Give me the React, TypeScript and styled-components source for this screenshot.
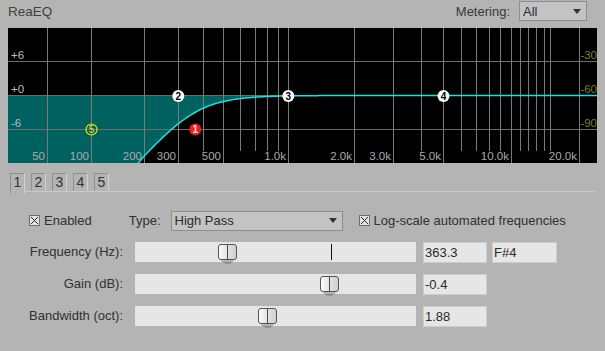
import React from 'react';
import styled, { createGlobalStyle } from 'styled-components';

const GlobalStyle = createGlobalStyle`
  html, body {
    margin: 0;
    padding: 0;
    background: #b4b4b4;
  }
  body {
    font-family: "Liberation Sans", Arial, sans-serif;
  }
`;

// graph geometry (svg coords)
const W = 589;
const H = 135;
const Y0 = 67.5;
const PX_PER_DB = 5.625;

// frequency -> page x, read off the grid
const anchors: [number, number][] = [
  [50, 47.7], [100, 91.7], [200, 144.3], [300, 178.7], [400, 203.3], [500, 223.3],
  [600, 240.7], [700, 255], [800, 267.7], [900, 278.7], [1000, 288.7], [2000, 354.3],
  [3000, 393.3], [4000, 421.3], [5000, 443.3], [6000, 461.3], [7000, 476], [8000, 489.3],
  [9000, 500.3], [10000, 511.3], [11000, 520.3], [12000, 528.7], [13000, 536.7],
  [14000, 544.3], [15000, 550.3], [20000, 579.3],
];

function freqToX(f: number) {
  let i = 0;
  if (f >= anchors[anchors.length - 1][0]) i = anchors.length - 2;
  else if (f > anchors[0][0]) {
    while (f > anchors[i + 1][0]) i++;
  }
  const [f1, x1] = anchors[i];
  const [f2, x2] = anchors[i + 1];
  const t = Math.log(f / f1) / Math.log(f2 / f1);
  return x1 + t * (x2 - x1) - 8;
}

const dbToY = (db: number) => Y0 - db * PX_PER_DB;

// 2nd order high pass at 363.3 Hz
function highPassDb(f: number) {
  const r = Math.pow(f / 363.3, 4);
  return 10 * Math.log10(r / (1 + r));
}

const curvePoints: [number, number][] = [];
for (let f = 120; f <= 24500; f *= 1.025) {
  curvePoints.push([freqToX(f), Math.min(dbToY(highPassDb(f)), H + 3)]);
}
const curvePath = curvePoints
  .map(([x, y], i) => `${i ? 'L' : 'M'}${x.toFixed(2)},${y.toFixed(2)}`)
  .join(' ');
const fillPath = `M0,${Y0} L0,${H + 3} ${curvePoints
  .map(([x, y]) => `L${x.toFixed(2)},${y.toFixed(2)}`)
  .join(' ')} L${W},${Y0} Z`;

type VLine = { x: number; label?: string };

const vlines: VLine[] = [
  { x: 47, label: '50' }, { x: 91, label: '100' }, { x: 144, label: '200' },
  { x: 178, label: '300' }, { x: 203 }, { x: 223, label: '500' }, { x: 240 },
  { x: 255 }, { x: 267 }, { x: 278 }, { x: 288, label: '1.0k' },
  { x: 354, label: '2.0k' }, { x: 393, label: '3.0k' }, { x: 421 },
  { x: 443, label: '5.0k' }, { x: 461 }, { x: 476 }, { x: 489 }, { x: 500 },
  { x: 511, label: '10.0k' }, { x: 520 }, { x: 528 }, { x: 536 }, { x: 544 },
  { x: 550 }, { x: 579, label: '20.0k' },
];

const hlines = [33.5, 67.5, 101.5];

const dbLabels = [
  { y: 31, left: '+6', right: '-30' },
  { y: 65, left: '+0', right: '-60' },
  { y: 99, left: '-6', right: '-90' },
];

type Node = { id: number; x: number; y: number; kind: 'white' | 'red' | 'ring' };

const nodes: Node[] = [
  { id: 2, x: 178.3 - 8, y: 96 - 28, kind: 'white' },
  { id: 3, x: 288.3 - 8, y: 96 - 28, kind: 'white' },
  { id: 4, x: 443.5 - 8, y: 96 - 28, kind: 'white' },
  { id: 1, x: 195.3 - 8, y: 129.5 - 28, kind: 'red' },
  { id: 5, x: 91.5 - 8, y: 129.5 - 28, kind: 'ring' },
];

const sliders = [
  { label: 'Frequency (Hz):', thumb: 83, value: '363.3', note: 'F#4', marker: 196 },
  { label: 'Gain (dB):', thumb: 185, value: '-0.4' },
  { label: 'Bandwidth (oct):', thumb: 123, value: '1.88' },
];

function App() {
  return (
    <Page>
      <GlobalStyle />
      <Header>
        <Title>ReaEQ</Title>
        <Metering>
          Metering:
          <Select $width={68}>
            All
            <Arrow />
          </Select>
        </Metering>
      </Header>

      <Graph>
        <svg width={W} height={H} viewBox={`0 0 ${W} ${H}`}>
          <path d={fillPath} fill="#006161" />
          {hlines.map(y => (
            <line key={y} x1={0} x2={W} y1={y} y2={y} stroke="#6c6c6c" strokeWidth={1} />
          ))}
          {vlines.map(v => (
            <line
              key={v.x}
              x1={v.x - 8 + 0.5}
              x2={v.x - 8 + 0.5}
              y1={0}
              y2={v.label ? H : 123}
              stroke="#7a7a7a"
              strokeWidth={1}
            />
          ))}
          {dbLabels.map(l => (
            <React.Fragment key={l.y}>
              <GridText x={3} y={l.y} $color="#bdbdbd">{l.left}</GridText>
              <GridText x={W} y={l.y} textAnchor="end" $color="#7e7e2a">{l.right}</GridText>
            </React.Fragment>
          ))}
          {vlines.filter(v => v.label).map(v => (
            <GridText key={v.x} x={v.x - 8 - 2} y={132} textAnchor="end" $color="#ababab">
              {v.label}
            </GridText>
          ))}
          <path d={curvePath} fill="none" stroke="#13e3e3" strokeWidth={1.5} />
          {nodes.map(n => (
            <g key={n.id}>
              <circle
                cx={n.x}
                cy={n.y}
                r={n.kind === 'ring' ? 5.5 : 6}
                fill={n.kind === 'white' ? '#ffffff' : n.kind === 'red' ? '#ee1d1d' : 'none'}
                stroke={n.kind === 'ring' ? '#e6e600' : 'none'}
                strokeWidth={1.2}
              />
              <NodeText
                x={n.x}
                y={n.y + 3.6}
                textAnchor="middle"
                $bold={n.kind !== 'ring'}
                $color={n.kind === 'white' ? '#000' : n.kind === 'red' ? '#ffe0e0' : '#e6e600'}
              >
                {n.id}
              </NodeText>
            </g>
          ))}
        </svg>
      </Graph>

      <TabBar>
        {[1, 2, 3, 4, 5].map(n => (
          <Tab key={n} $active={n === 1}>{n}</Tab>
        ))}
      </TabBar>

      <Controls>
        <TopRow>
          <Check />
          <CheckLabel>Enabled</CheckLabel>
          <TypeLabel>Type:</TypeLabel>
          <Select $width={172}>
            High Pass
            <Arrow />
          </Select>
          <Check $gap={16} />
          <CheckLabel>Log-scale automated frequencies</CheckLabel>
        </TopRow>

        {sliders.map(s => (
          <SliderRow key={s.label}>
            <RowLabel>{s.label}</RowLabel>
            <Track>
              {s.marker !== undefined && <Marker style={{ left: s.marker }} />}
              <Thumb style={{ left: s.thumb }} />
            </Track>
            <ValueBox>{s.value}</ValueBox>
            {s.note && <ValueBox $gap={5} $width={65}>{s.note}</ValueBox>}
          </SliderRow>
        ))}
      </Controls>
    </Page>
  );
}

function Check({ $gap }: { $gap?: number }) {
  return (
    <CheckBox $gap={$gap}>
      <svg width={9} height={9} viewBox="0 0 9 9">
        <path d="M1 1 L8 8 M8 1 L1 8" stroke="#2b2b2b" strokeWidth={1} />
      </svg>
    </CheckBox>
  );
}

const Page = styled.div`
  width: 605px;
  height: 351px;
  overflow: hidden;
  background: #b4b4b4;
  color: #303030;
  font-family: "Liberation Sans", Arial, sans-serif;
  font-size: 13px;
`;

const Header = styled.div`
  height: 22px;
  display: flex;
  align-items: center;
  justify-content: space-between;
  padding: 0 18px 0 8px;
`;

const Title = styled.div`
  font-size: 13.5px;
  color: #404040;
`;

const Metering = styled.div`
  display: flex;
  align-items: center;
  gap: 9px;
  color: #383838;
`;

const Select = styled.div<{ $width: number }>`
  width: ${p => p.$width}px;
  height: 20px;
  box-sizing: border-box;
  display: flex;
  align-items: center;
  justify-content: space-between;
  padding: 0 5px 0 3px;
  background: #c3c3c3;
  border: 1px solid #8e8e8e;
  color: #2a2a2a;
`;

const Arrow = styled.span`
  width: 0;
  height: 0;
  border-left: 4px solid transparent;
  border-right: 4px solid transparent;
  border-top: 5px solid #333;
`;

const Graph = styled.div`
  margin: 6px 8px 0;
  height: ${H}px;
  background: #000;

  svg {
    display: block;
  }
`;

const GridText = styled.text<{ $color: string }>`
  font-family: "Liberation Sans", Arial, sans-serif;
  font-size: 11.5px;
  fill: ${p => p.$color};
`;

const NodeText = styled.text<{ $color: string; $bold?: boolean }>`
  font-family: "Liberation Sans", Arial, sans-serif;
  font-size: 10px;
  font-weight: ${p => (p.$bold ? 'bold' : 'normal')};
  fill: ${p => p.$color};
`;

const TabBar = styled.div`
  display: flex;
  align-items: flex-start;
  gap: 6px;
  height: 18px;
  margin: 10px 10px 0 10px;
  border-bottom: 1px solid #c9c9c9;
`;

const Tab = styled.div<{ $active?: boolean }>`
  width: 15px;
  height: ${p => (p.$active ? 21 : 18)}px;
  box-sizing: border-box;
  border: 1px solid;
  border-color: #8e8e8e #d2d2d2 ${p => (p.$active ? 'transparent' : '#b4b4b4')} #8e8e8e;
  background: #b4b4b4;
  font-size: 14px;
  line-height: 16px;
  text-align: center;
  color: #333;
`;

const Controls = styled.div`
  margin-top: 18px;
  display: flex;
  flex-direction: column;
  gap: 11px;
`;

const TopRow = styled.div`
  height: 21px;
  display: flex;
  align-items: center;
  padding-left: 29px;
`;

const CheckBox = styled.span<{ $gap?: number }>`
  width: 11px;
  height: 11px;
  box-sizing: border-box;
  margin-left: ${p => p.$gap ?? 0}px;
  display: flex;
  align-items: center;
  justify-content: center;
  background: #e4e4e4;
  border: 1px solid #6e6e6e;

  svg {
    display: block;
  }
`;

const CheckLabel = styled.span`
  margin-left: 4px;
`;

const TypeLabel = styled.span`
  margin-left: 37px;
  margin-right: 10px;
`;

const SliderRow = styled.div`
  height: 21px;
  display: flex;
  align-items: flex-start;
`;

const RowLabel = styled.div`
  width: 123px;
  flex-shrink: 0;
  text-align: right;
  line-height: 20px;
`;

const Track = styled.div`
  position: relative;
  z-index: 0;
  margin-left: 12px;
  width: 281px;
  height: 20px;
  flex-shrink: 0;
  background: #e6e6e6;
`;

const Marker = styled.div`
  position: absolute;
  top: 2px;
  width: 1px;
  height: 16px;
  background: #111;
`;

const Thumb = styled.div`
  position: absolute;
  top: 2px;
  width: 19px;
  height: 16px;
  box-sizing: border-box;
  border: 1px solid #555;
  border-radius: 3px;
  background: linear-gradient(90deg, #fbfbfb 0%, #e2e2e2 50%, #cfcfcf 100%);

  &::before {
    content: "";
    position: absolute;
    left: 8px;
    top: 0;
    bottom: 0;
    width: 1px;
    background: #4a4a4a;
  }

  &::after {
    content: "";
    position: absolute;
    z-index: -1;
    left: 2px;
    right: 2px;
    bottom: -5px;
    height: 10px;
    border-radius: 0 0 50% 50%;
    background: rgba(0, 0, 0, 0.22);
  }
`;

const ValueBox = styled.div<{ $gap?: number; $width?: number }>`
  margin-left: ${p => p.$gap ?? 7}px;
  width: ${p => p.$width ?? 64}px;
  height: 21px;
  box-sizing: border-box;
  flex-shrink: 0;
  padding-left: 1px;
  line-height: 19px;
  background: #e6e6e6;
  border: 1px solid #cdcdcd;
  color: #2a2a2a;
`;

export default App;
